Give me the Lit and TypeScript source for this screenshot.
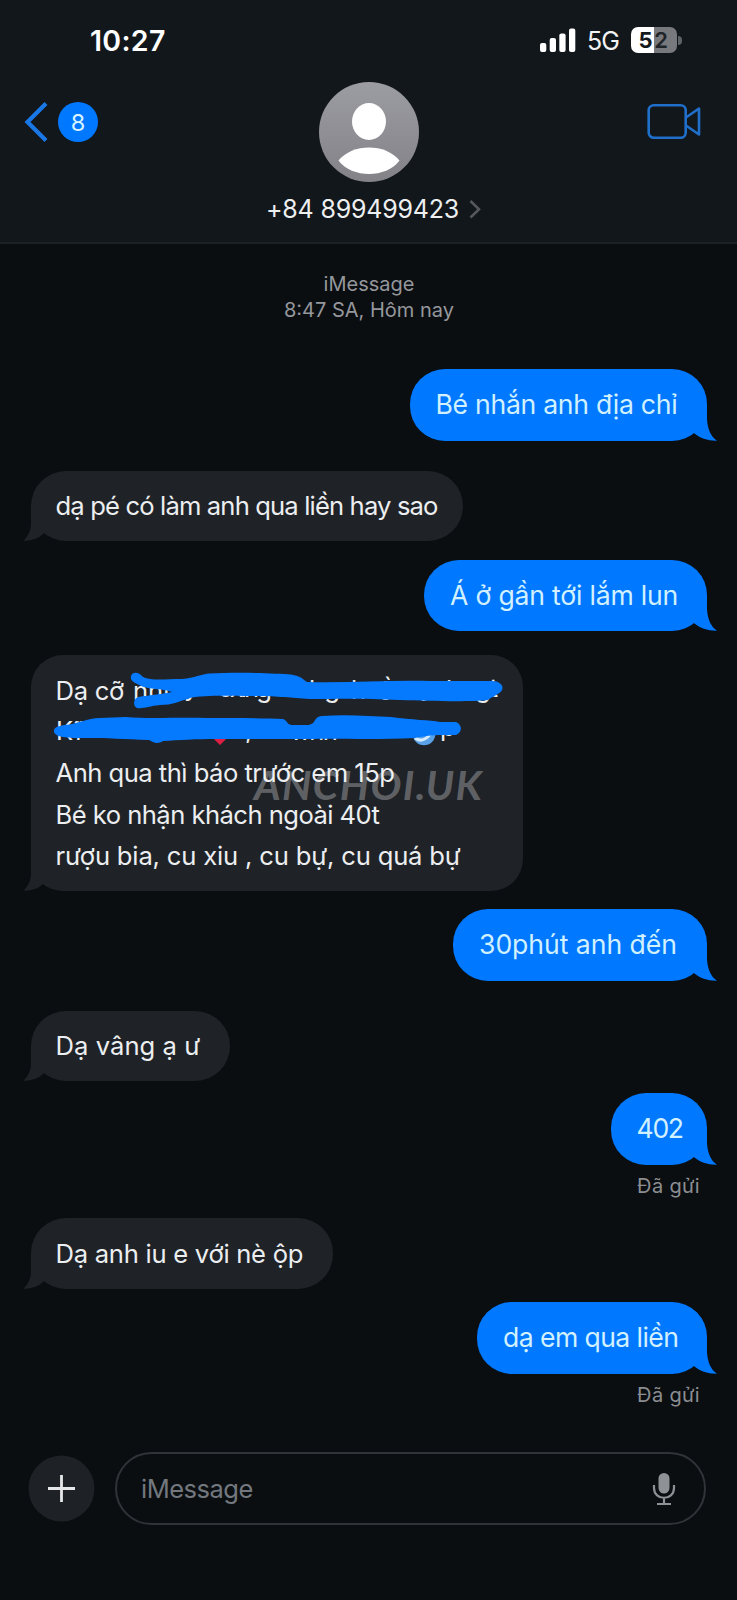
import { LitElement, html, svg, css, nothing } from "lit";
import { customElement, property } from "lit/decorators.js";
import { classMap } from "lit/directives/class-map.js";
import { styleMap } from "lit/directives/style-map.js";

interface Line { text: string; track: number; }
interface Message {
  sent: boolean;
  gap: number;
  width: number;
  height: number;
  lines: Line[];
  status?: string;
  redacted?: boolean;
}

const MESSAGES: Message[] = [
  { sent: true, gap: 0, width: 297, height: 71.5, lines: [{ text: "Bé nhắn anh địa chỉ", track: -0.28 }] },
  { sent: false, gap: 30, width: 432, height: 70, lines: [{ text: "dạ pé có làm anh qua liền hay sao", track: -0.85 }] },
  { sent: true, gap: 19, width: 282.5, height: 71.5, lines: [{ text: "Á ở gần tới lắm lun", track: -0.2 }] },
  {
    sent: false, gap: 24, width: 492, height: 236, redacted: true,
    lines: [
      { text: "Dạ cỡ", track: -0.3 },
      { text: "", track: 0 },
      { text: "Anh qua thì báo trước em 15p", track: -0.52 },
      { text: "Bé ko nhận khách ngoài 40t", track: -0.54 },
      { text: "rượu bia, cu xiu , cu bự, cu quá bự", track: -0.17 },
    ],
  },
  { sent: true, gap: 18, width: 253.5, height: 72, lines: [{ text: "30phút anh đến", track: -0.04 }] },
  { sent: false, gap: 29.5, width: 198.5, height: 70.5, lines: [{ text: "Dạ vâng ạ ư", track: 0.05 }] },
  { sent: true, gap: 12, width: 96, height: 72, lines: [{ text: "402", track: -1.3 }], status: "Đã gửi" },
  { sent: false, gap: 10, width: 302, height: 71, lines: [{ text: "Dạ anh iu e với nè ộp", track: -0.27 }] },
  { sent: true, gap: 13, width: 229.5, height: 72, lines: [{ text: "dạ em qua liền", track: -0.58 }], status: "Đã gửi" },
];

const SENT_TAIL = "M22 0V14C22.500 24 26 32 32 35.700C23 36 15 33 9.500 28.500L2 22V0Z";
const RECEIVED_TAIL = "M10 0V18C10 26 7 31 2.500 35.700C11 36 18 33 22.500 28.500L30 22V0Z";

@customElement("chat-bubble")
class ChatBubble extends LitElement {
  @property({ attribute: false }) message!: Message;

  static styles = css`
    :host { display: flex; flex-direction: column; }
    .bubble {
      position: relative; box-sizing: border-box; border-radius: 35px;
      display: flex; flex-direction: column; justify-content: center;
      font-size: 26.6px; line-height: 41.3px;
    }
    .sent { align-self: flex-end; margin-right: 30.5px; padding-left: 26px; background: #0078ff; color: #d2f1ff; }
    .received { align-self: flex-start; margin-left: 31px; padding-left: 24.5px; background: #1f2328; color: #eceef0; font-size: 25.6px; }
    .long { border-radius: 32px; }
    .line { white-space: pre; height: 41.3px; }
    .tail { position: absolute; bottom: 0; width: 32px; height: 36px; }
    .sent .tail { right: -10px; fill: #0078ff; }
    .received .tail { left: -10px; fill: #1f2328; }
    .status { align-self: flex-end; margin: 8px 37px 0 0; height: 35px; font-size: 20px; line-height: 27px; letter-spacing: .35px; color: #8c8e92; }
    .scribble { position: absolute; left: 0; top: 0; width: 492px; height: 110px; overflow: visible; }
    .scribble text { font-family: Inter, sans-serif; font-size: 25.6px; fill: #eceef0; }
    .marker { fill: #067aff; }
  `;

  private scribble() {
    return html`<svg class="scribble" viewBox="31 655 492 110">
      <text x="133" y="700">nhu</text>
      <text x="184" y="696">yo</text>
      <text x="218" y="697" textLength="54">oxing</text>
      <text x="284" y="697" textLength="56">ơnng</text>
      <text x="309" y="699">h</text>
      <text x="351" y="699">h</text>
      <text x="378" y="700">ồ</text>
      <text x="420" y="696">y</text>
      <text x="446" y="699">h</text>
      <text x="475" y="697" textLength="23">gt</text>
      <text x="56" y="740">Kĩ</text>
      <text x="102" y="738">m</text>
      <path fill="#e01f45" d="M220 745 L208 733 C203 725 212 717 220 724 C228 717 237 725 232 733Z"/>
      <text x="245" y="739">,</text>
      <text x="290" y="739.500" textLength="48">wnh</text>
      <text x="362" y="737">o</text>
      <circle cx="424" cy="734" r="11.3" fill="#5aa2e8"/>
      <path d="M415 738 Q424 745 434 729" fill="none" stroke="#d7ecff" stroke-width="3"/>
      <text x="440" y="736">p</text>
      <path class="marker" d="M131 676 C133 671 139 672 143 677 C151 681 165 679 182 679 C195 678 201 674 210 673.5 C235 672 275 673 291 674.5 C301 676 304 680 307 682 C350 683 390 680 430 681 L492 681 C500 681 504 686 502 690 C500 694 493 696 488 700 C470 702 430 701 400 700 C360 698 335 699 310 699 C290 698 280 696 255 696 C225 696 205 695 190 698 C177 702 173 705 160 705 C149 706 143 709 137 708 C132 705 134 699 138 697 C151 695 163 694 172 692 C162 688 148 690 139 685 C134 682 130 681 131 676Z"/>
      <path class="marker" d="M54 732 C53 727 59 726 65 725 C78 724 87 718 100 718 L126 717 C148 719 181 717 207 718 C232 718 263 718 283 719 C288 721 287 725 292 725 L309 725 C317 723 313 717 322 716 C345 714 370 716 391 717 C412 720 430 720 440 722 L456 722 C463 725 462 733 456 735 L442 735 C432 735 425 736 415 738 C370 740 335 738 310 739 C275 739 245 739 215 739 C197 739 178 740 163 741 C157 745 153 742 149 740 C125 739 105 738 90 738 C76 738 56 739 54 732Z"/>
    </svg>`;
  }

  render() {
    const m = this.message;
    return html`
      <div class=${classMap({ bubble: true, sent: m.sent, received: !m.sent, long: m.lines.length > 1 })}
        style=${styleMap({ width: `${m.width}px`, height: `${m.height}px` })}>
        <svg class="tail" viewBox="0 0 32 36"><path d=${m.sent ? SENT_TAIL : RECEIVED_TAIL}/></svg>
        ${m.lines.map(l => html`<div class="line" style=${styleMap({ letterSpacing: `${l.track}px` })}>${l.text}</div>`)}
        ${m.redacted ? this.scribble() : nothing}
      </div>
      ${m.status ? html`<div class="status">${m.status}</div>` : nothing}`;
  }
}

@customElement("app-root")
class AppRoot extends LitElement {
  static styles = css`
    :host {
      display: flex; flex-direction: column; box-sizing: border-box; position: relative;
      width: 737px; height: 1600px; overflow: hidden; background: #0a0e11; color: #fff;
      font-family: Inter, "Liberation Sans", sans-serif;
    }
    header { height: 244px; box-sizing: border-box; background: #12171b; border-bottom: 2px solid #1d2124; }
    .statusbar { display: flex; align-items: center; height: 80px; padding: 0 55px 0 90px; }
    .time { font-size: 28.5px; font-weight: 600; letter-spacing: .3px; flex: 1; }
    .signal { width: 36px; height: 24px; margin-right: 11px; fill: #fff; }
    .net { font-size: 25px; letter-spacing: -.9px; width: 33px; margin-right: 11px; padding-top: 2px; color: #f2f3f4; }
    .battery {
      display: flex; align-items: center; justify-content: center; width: 46px; height: 26px; border-radius: 7px;
      background: linear-gradient(90deg, #fff 50%, #77797c 50%); color: #14181b;
      font-size: 22px; font-weight: 700; letter-spacing: 1.5px;
    }
    .battery .rest { font-weight: 600; color: #202428; }
    .nub { width: 4px; height: 9px; margin-left: 1px; border-radius: 0 4px 4px 0; background: #606366; }
    .nav { display: grid; grid-template-columns: 1fr 100px 1fr; padding-top: 2px; }
    .back { display: flex; align-items: center; gap: 10px; height: 80px; padding-left: 24px; }
    .chevron { width: 24px; height: 42px; }
    .count {
      display: flex; align-items: center; justify-content: center; width: 40px; height: 40px; border-radius: 50%;
      background: #0078ff; color: #d8f3ff; font-size: 23.5px;
    }
    .avatar { width: 100px; height: 100px; }
    .video { justify-self: end; width: 54px; height: 40px; margin: 20px 36px 0 0; }
    .contact { display: flex; align-items: center; gap: 10px; padding-left: 266px; height: 54px; font-size: 25px; letter-spacing: -.2px; color: #edeff0; }
    .more { width: 12px; height: 20px; }
    .stamp { display: flex; flex-direction: column; align-items: center; margin-top: 27px; padding-left: 1px; font-size: 20px; line-height: 26px; color: #95979c; }
    .thread { display: flex; flex-direction: column; margin-top: 46px; }
    .composer { display: flex; align-items: center; gap: 20px; margin-top: 35px; padding: 0 31px 0 28px; }
    .plus { width: 67px; height: 67px; }
    .field {
      box-sizing: border-box; display: flex; align-items: center; justify-content: space-between; flex: 1; height: 73px;
      border: 2px solid #303438; border-radius: 37px; padding: 0 28px 0 24px;
      font-size: 25.5px; letter-spacing: -.5px; color: #73777e;
    }
    .mic { width: 24px; height: 34px; }
    .watermark {
      position: absolute; left: 254px; top: 760px; font: italic 700 41px/50px Lato, sans-serif; letter-spacing: 1.4px;
      color: rgba(255, 255, 255, .3);
    }
  `;

  render() {
    return html`
      <header>
        <div class="statusbar">
          <span class="time">10:27</span>
          <svg class="signal" viewBox="0 0 36 24">
            ${[[0, 9], [9.7, 14], [19.3, 18.5], [29, 23.5]].map(([x, h]) => svg`<rect x=${x} y=${24 - h} width="6.3" height=${h} rx="2"/>`)}
          </svg>
          <span class="net">5G</span>
          <span class="battery"><span>5</span><span class="rest">2</span></span><i class="nub"></i>
        </div>
        <div class="nav">
          <div class="back">
            <svg class="chevron" viewBox="0 0 24 42" fill="none" stroke="#1a78e6" stroke-width="4.200"><path d="M22 2.500L3.500 21L22 39.500"/></svg>
            <span class="count">8</span>
          </div>
          <svg class="avatar" viewBox="0 0 100 100">
            <defs><linearGradient id="g" x1="0" y1="0" x2="0" y2="1"><stop offset="0" stop-color="#9c9ca3"/><stop offset="1" stop-color="#828287"/></linearGradient></defs>
            <circle cx="50" cy="50" r="50" fill="url(#g)"/>
            <ellipse cx="50" cy="39.500" rx="17" ry="18.500" fill="#fff"/>
            <path d="M19.500 78.500C33 61 67 61 80.500 78.500C67 96.500 33 96.500 19.500 78.500Z" fill="#fff"/>
          </svg>
          <svg class="video" viewBox="0 0 54 40" fill="none" stroke="#1f6fcb" stroke-width="2.600" stroke-linejoin="round">
            <rect x="1.700" y="3.200" width="37" height="32.500" rx="5"/><path d="M39 15.500L52 6.500V32.500L39 23.500"/>
          </svg>
        </div>
        <div class="contact"><span>+84 899499423</span>
          <svg class="more" viewBox="0 0 12 20" fill="none" stroke="#54575c" stroke-width="2.600"><path d="M1.500 2L10 10.200L1.500 18.500"/></svg>
        </div>
      </header>
      <div class="stamp"><span>iMessage</span><span>8:47 SA, Hôm nay</span></div>
      <div class="thread">
        ${MESSAGES.map(m => html`<chat-bubble .message=${m} style=${styleMap({ marginTop: `${m.gap}px` })}></chat-bubble>`)}
      </div>
      <div class="composer">
        <svg class="plus" viewBox="0 0 67 67"><circle cx="33.500" cy="33.500" r="33" fill="#1e2126"/><path d="M33.500 20V47M20 33.500H47" stroke="#e6e7e8" stroke-width="2.800"/></svg>
        <div class="field"><span>iMessage</span>
          <svg class="mic" viewBox="0 0 24 34" fill="none" stroke="#8e9195" stroke-width="2.200">
            <rect x="6.500" y="1" width="11" height="20.500" rx="5.500" fill="#8e9195" stroke="none"/>
            <path d="M2 13V16C2 29 22 29 22 16V13M12 26V32M5 32H19"/>
          </svg>
        </div>
      </div>
      <div class="watermark">ANCHOI.UK</div>`;
  }
}
